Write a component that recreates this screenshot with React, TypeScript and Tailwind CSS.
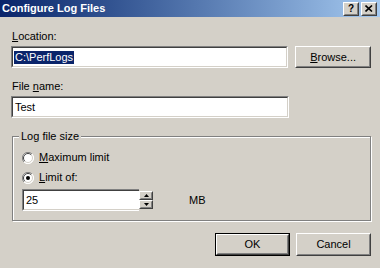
import React from "react";

const Sunken = ({ className = "", children }: { className?: string; children?: React.ReactNode }) => (
  <div className={"border border-t-[#808080] border-l-[#808080] border-b-white border-r-white " + className}>
    <div className="h-full border border-t-[#404040] border-l-[#404040] border-b-[#d4d0c8] border-r-[#d4d0c8] bg-white flex items-center">
      {children}
    </div>
  </div>
);

const Raised = ({ className = "", children }: { className?: string; children?: React.ReactNode }) => (
  <div className={"border border-t-white border-l-white border-b-[#404040] border-r-[#404040] bg-[#d4d0c8] " + className}>
    <div className="h-full border border-t-[#d4d0c8] border-l-[#d4d0c8] border-b-[#808080] border-r-[#808080] flex items-center justify-center">
      {children}
    </div>
  </div>
);

const Radio = ({ checked }: { checked?: boolean }) => (
  <svg width="12" height="12" viewBox="0 0 12 12" className="shrink-0">
    <circle cx="6" cy="6" r="5.5" fill="#ffffff" />
    <path d="M10 2 A5.5 5.5 0 0 0 2 10" stroke="#808080" strokeWidth="1" fill="none" />
    <path d="M9.2 2.8 A4.5 4.5 0 0 0 2.8 9.2" stroke="#404040" strokeWidth="1" fill="none" />
    <path d="M2 10 A5.5 5.5 0 0 0 10 2" stroke="#ffffff" strokeWidth="1" fill="none" />
    <path d="M2.8 9.2 A4.5 4.5 0 0 0 9.2 2.8" stroke="#d4d0c8" strokeWidth="1" fill="none" />
    {checked && <circle cx="6" cy="6" r="2" fill="#000000" />}
  </svg>
);

export default function App() {
  return (
    <div
      className="w-[380px] h-[268px] bg-[#d4d0c8] text-[11px] leading-[13px] text-black overflow-hidden"
      style={{ fontFamily: '"Liberation Sans", Arial, sans-serif' }}
    >
      {/* Title bar */}
      <div className="h-[17px] bg-gradient-to-r from-[#0a246a] to-[#a6caf0] flex items-center pl-[2px] pr-[3px]">
        <span className="text-white font-bold text-[11px] flex-1">Configure Log Files</span>
        <Raised className="w-[16px] h-[14px]">
          <span className="font-bold text-[10px] leading-none">?</span>
        </Raised>
        <Raised className="w-[16px] h-[14px] ml-[2px]">
          <svg width="8" height="7" viewBox="0 0 8 7">
            <path d="M0.5 0.5 L7 6.5 M7 0.5 L0.5 6.5" stroke="#000" strokeWidth="1.6" />
          </svg>
        </Raised>
      </div>

      <div className="pl-[11px] pr-[9px]">
        {/* Location */}
        <div className="mt-[13px] pl-[1px]">
          <span className="underline">L</span>ocation:
        </div>
        <div className="mt-[3px] flex gap-[7px]">
          <Sunken className="w-[278px] h-[22px]">
            <span className="ml-[1px] bg-[#0a246a] text-white px-[1px]">C:\PerfLogs</span>
          </Sunken>
          <Raised className="w-[76px] h-[22px]">
            <span><span className="underline">B</span>rowse...</span>
          </Raised>
        </div>

        {/* File name */}
        <div className="mt-[12px] pl-[1px]">
          File <span className="underline">n</span>ame:
        </div>
        <div className="mt-[3px]">
          <Sunken className="w-[278px] h-[22px]">
            <span className="ml-[2px]">Test</span>
          </Sunken>
        </div>

        {/* Group box */}
        <div className="relative mt-[18px] ml-[1px] w-[359px] h-[85px] border border-[#808080] shadow-[inset_1px_1px_0_#ffffff,1px_1px_0_#ffffff]">
          <div className="absolute -top-[7px] left-[6px] bg-[#d4d0c8] px-[2px]">Log file size</div>
          <div className="pt-[14px] pl-[9px]">
            <div className="flex items-center gap-[5px]">
              <Radio />
              <span><span className="underline">M</span>aximum limit</span>
            </div>
            <div className="flex items-center gap-[5px] mt-[7px]">
              <Radio checked />
              <span><span className="underline">L</span>imit of:</span>
            </div>
            <div className="flex items-center mt-[5px]">
              <Sunken className="w-[119px] h-[22px]">
                <span className="ml-[2px]">25</span>
              </Sunken>
              <div className="flex flex-col w-[16px] h-[22px] -ml-[2px] border-t-2 border-b-2 border-r-2 border-t-[#d4d0c8] border-b-[#d4d0c8] border-r-[#d4d0c8]">
                <Raised className="w-full h-[9px]">
                  <svg width="5" height="3" viewBox="0 0 5 3"><path d="M2.5 0 L5 3 L0 3 Z" fill="#000" /></svg>
                </Raised>
                <Raised className="w-full h-[9px]">
                  <svg width="5" height="3" viewBox="0 0 5 3"><path d="M0 0 L5 0 L2.5 3 Z" fill="#000" /></svg>
                </Raised>
              </div>
              <span className="ml-[34px]">MB</span>
            </div>
          </div>
        </div>

        {/* Buttons */}
        <div className="mt-[12px] flex justify-end gap-[6px]">
          <div className="border border-black">
            <Raised className="w-[73px] h-[21px]">OK</Raised>
          </div>
          <Raised className="w-[75px] h-[23px]">Cancel</Raised>
        </div>
      </div>
    </div>
  );
}
